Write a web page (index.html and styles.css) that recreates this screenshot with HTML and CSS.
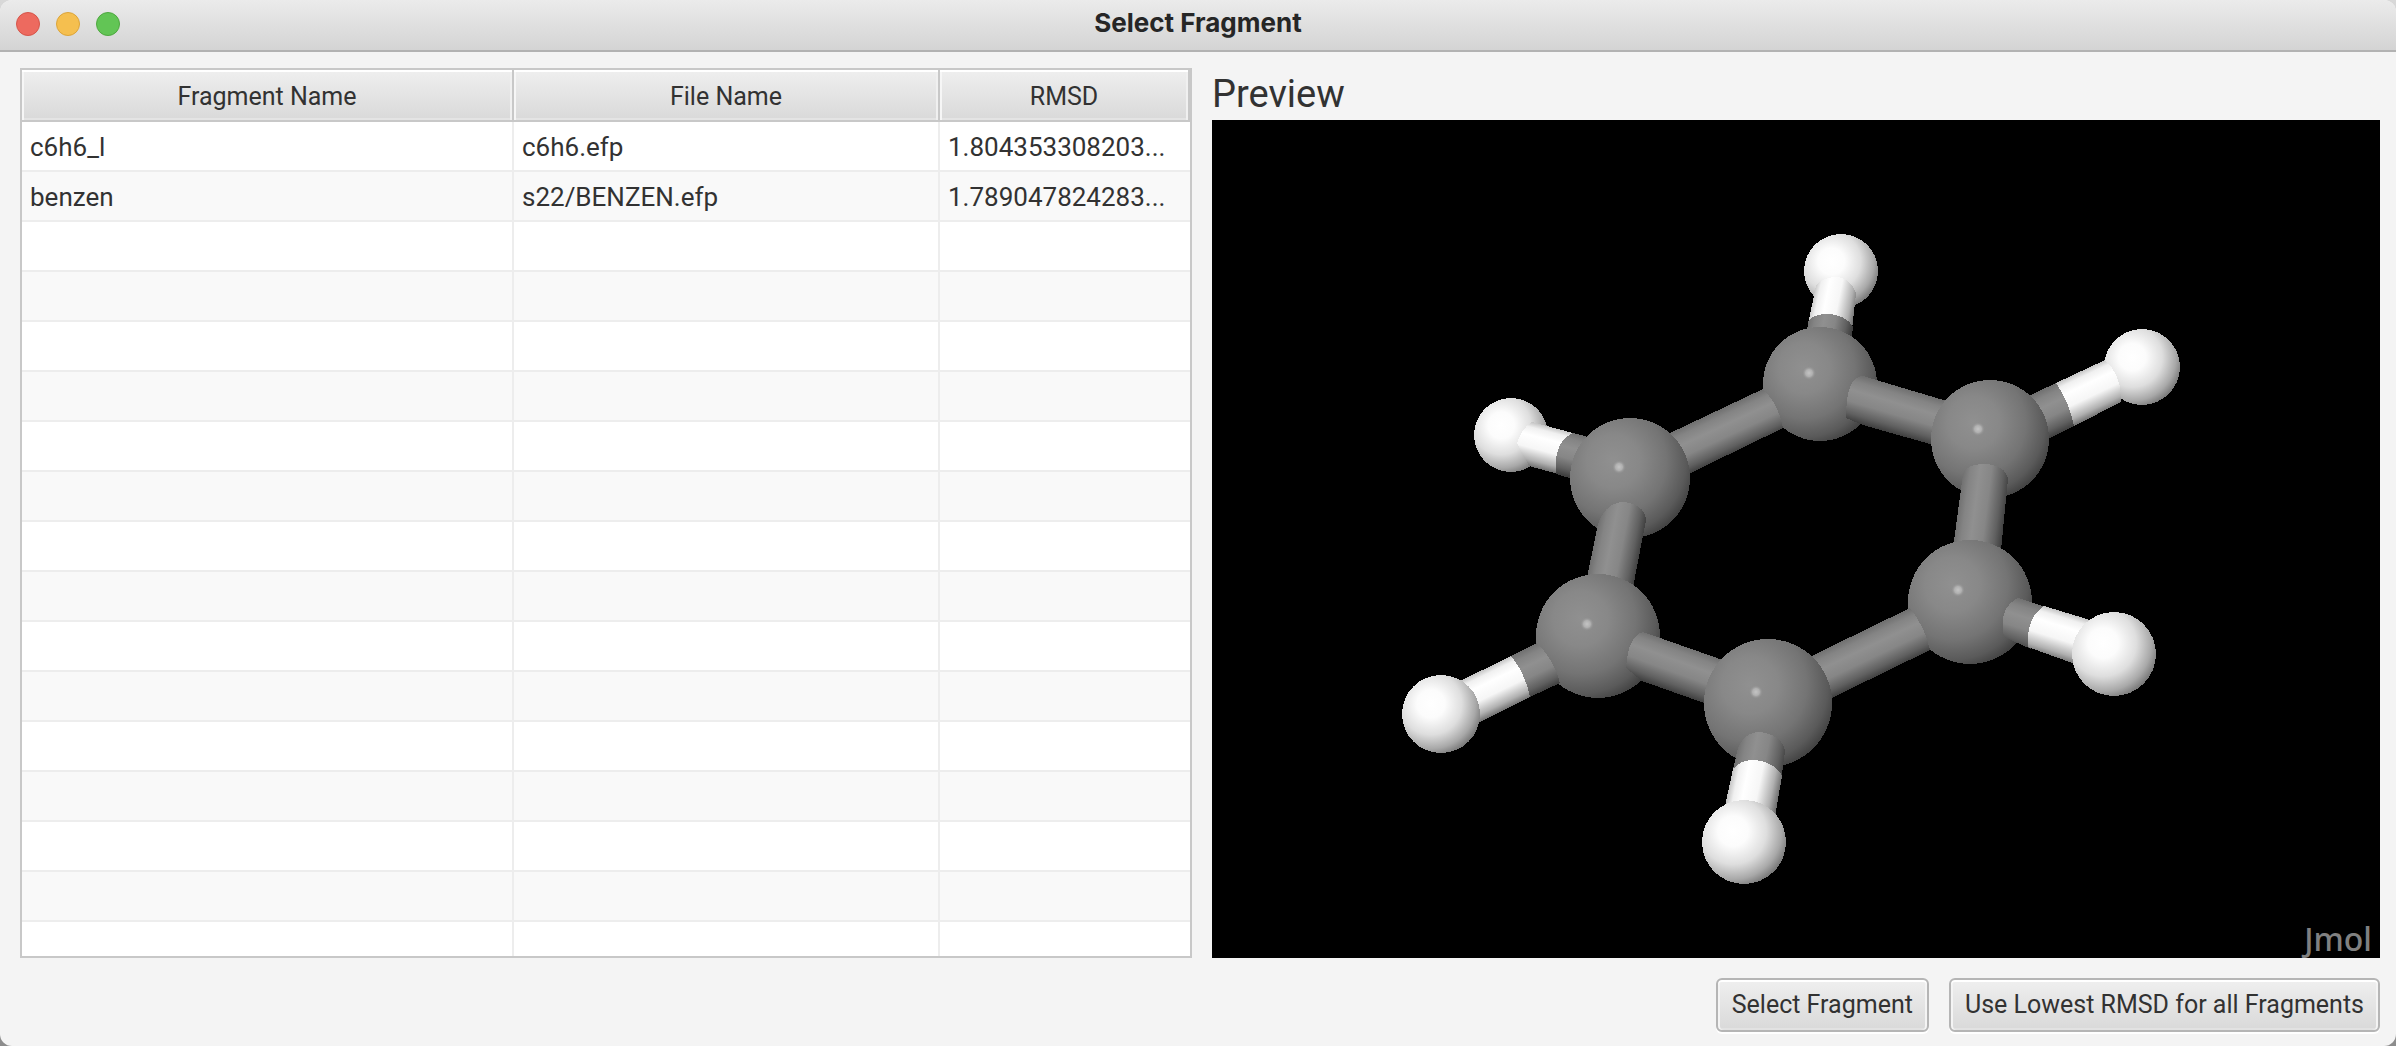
FILE: index.html
```html
<!DOCTYPE html>
<html lang="en">
<head>
<meta charset="utf-8">
<title>Select Fragment</title>
<link rel="stylesheet" href="styles.css">
</head>
<body>
<div class="window">
  <header class="titlebar">
    <div class="lights">
      <button class="light light-close" aria-label="Close"></button>
      <button class="light light-minimize" aria-label="Minimize"></button>
      <button class="light light-zoom" aria-label="Zoom"></button>
    </div>
    <h1 class="title">Select Fragment</h1>
  </header>

  <main class="content">
    <div class="table-frame">
      <table class="fragments">
        <colgroup><col class="col-fragment"><col class="col-file"><col></colgroup>
        <thead>
          <tr><th scope="col">Fragment Name</th><th scope="col">File Name</th><th scope="col">RMSD</th></tr>
        </thead>
        <tbody>
          <tr><td>c6h6_l</td><td>c6h6.efp</td><td>1.804353308203...</td></tr>
          <tr><td>benzen</td><td>s22/BENZEN.efp</td><td>1.789047824283...</td></tr>
          <tr><td></td><td></td><td></td></tr>
          <tr><td></td><td></td><td></td></tr>
          <tr><td></td><td></td><td></td></tr>
          <tr><td></td><td></td><td></td></tr>
          <tr><td></td><td></td><td></td></tr>
          <tr><td></td><td></td><td></td></tr>
          <tr><td></td><td></td><td></td></tr>
          <tr><td></td><td></td><td></td></tr>
          <tr><td></td><td></td><td></td></tr>
          <tr><td></td><td></td><td></td></tr>
          <tr><td></td><td></td><td></td></tr>
          <tr><td></td><td></td><td></td></tr>
          <tr><td></td><td></td><td></td></tr>
          <tr><td></td><td></td><td></td></tr>
          <tr><td></td><td></td><td></td></tr>
        </tbody>
      </table>
    </div>

    <section class="preview">
      <h2 class="preview-title">Preview</h2>
      <div class="viewer">
        <svg class="molecule" viewBox="1212 120 1168 838" role="img" aria-label="Benzene molecule" shape-rendering="crispEdges">
          <defs>
            <radialGradient id="carbon" cx=".36" cy=".36" r=".74">
              <stop offset="0" stop-color="#909090"/><stop offset=".3" stop-color="#888"/>
              <stop offset=".6" stop-color="#747474"/><stop offset=".82" stop-color="#5a5a5a"/><stop offset=".95" stop-color="#404040"/>
            </radialGradient>
            <radialGradient id="hydrogen" cx=".37" cy=".37" r=".72">
              <stop offset="0" stop-color="#fff"/><stop offset=".25" stop-color="#fcfcfc"/>
              <stop offset=".55" stop-color="#dedede"/><stop offset=".8" stop-color="#a8a8a8"/><stop offset=".95" stop-color="#767676"/>
            </radialGradient>
            <radialGradient id="glint">
              <stop offset="0" stop-color="#c4c4c4"/><stop offset=".5" stop-color="#b0b0b0"/><stop offset="1" stop-color="#8e8e8e" stop-opacity="0"/>
            </radialGradient>
            <linearGradient id="gray">
              <stop offset="0" stop-color="#707070"/><stop offset=".15" stop-color="#848484"/><stop offset=".35" stop-color="#909090"/>
              <stop offset=".6" stop-color="#868686"/><stop offset=".85" stop-color="#606060"/><stop offset="1" stop-color="#404040"/>
            </linearGradient>
            <linearGradient id="white">
              <stop offset="0" stop-color="#c4c4c4"/><stop offset=".12" stop-color="#f0f0f0"/><stop offset=".3" stop-color="#fff"/>
              <stop offset=".58" stop-color="#f6f6f6"/><stop offset=".85" stop-color="#b0b0b0"/><stop offset="1" stop-color="#707070"/>
            </linearGradient>
            <linearGradient id="g16" href="#gray" gradientUnits="userSpaceOnUse" x1="1672" y1="432" x2="1691" y2="473"/>
            <linearGradient id="g34" href="#gray" gradientUnits="userSpaceOnUse" x1="1811" y1="656" x2="1831" y2="698"/>
            <linearGradient id="g56" href="#gray" gradientUnits="userSpaceOnUse" x1="1946" y1="401" x2="1933" y2="445"/>
            <linearGradient id="g23" href="#gray" gradientUnits="userSpaceOnUse" x1="1720" y1="659" x2="1704" y2="703"/>
            <linearGradient id="g12" href="#gray" gradientUnits="userSpaceOnUse" x1="1588" y1="574" x2="1634" y2="583"/>
            <linearGradient id="g45" href="#gray" gradientUnits="userSpaceOnUse" x1="1954" y1="540" x2="2001" y2="546"/>
            <linearGradient id="g1h" href="#gray" gradientUnits="userSpaceOnUse" x1="1532" y1="422" x2="1521" y2="464"/>
            <linearGradient id="w1h" href="#white" gradientUnits="userSpaceOnUse" x1="1532" y1="422" x2="1521" y2="464"/>
            <linearGradient id="g2h" href="#gray" gradientUnits="userSpaceOnUse" x1="1464" y1="679" x2="1484" y2="720"/>
            <linearGradient id="w2h" href="#white" gradientUnits="userSpaceOnUse" x1="1464" y1="679" x2="1484" y2="720"/>
            <linearGradient id="g3h" href="#gray" gradientUnits="userSpaceOnUse" x1="1726" y1="803" x2="1775" y2="813"/>
            <linearGradient id="w3h" href="#white" gradientUnits="userSpaceOnUse" x1="1726" y1="803" x2="1775" y2="813"/>
            <linearGradient id="g4h" href="#gray" gradientUnits="userSpaceOnUse" x1="2086" y1="619" x2="2072" y2="664"/>
            <linearGradient id="w4h" href="#white" gradientUnits="userSpaceOnUse" x1="2086" y1="619" x2="2072" y2="664"/>
            <linearGradient id="g5h" href="#gray" gradientUnits="userSpaceOnUse" x1="2031" y1="395" x2="2051" y2="437"/>
            <linearGradient id="w5h" href="#white" gradientUnits="userSpaceOnUse" x1="2031" y1="395" x2="2051" y2="437"/>
            <linearGradient id="g6h" href="#gray" gradientUnits="userSpaceOnUse" x1="1808" y1="320" x2="1852" y2="329"/>
            <linearGradient id="w6h" href="#white" gradientUnits="userSpaceOnUse" x1="1808" y1="320" x2="1852" y2="329"/>
          </defs>

          <!-- Back of the ring -->
          <circle cx="1841" cy="271" r="37" fill="url(#hydrogen)"/>
          <path fill="url(#w6h)" d="M1816 286Q1822 277 1837 277Q1850 278 1856 293L1852 330L1808 324Z"/>
          <path fill="url(#g6h)" d="M1808 321Q1814 314 1828 314Q1846 315 1853 327L1850 350L1806 344Z"/>
          <circle cx="1820" cy="384" r="57" fill="url(#carbon)"/>
          <circle cx="1809" cy="373" r="7" fill="url(#glint)"/>
          <path fill="url(#g56)" d="M1863 376L1960 405L1944 448L1863 425L1846 418Q1846 376 1863 376Z"/>
          <path fill="url(#g16)" d="M1651 442L1763 389Q1779 405 1783 428L1672 482Z"/>

          <circle cx="1511" cy="435" r="37" fill="url(#hydrogen)"/>
          <path fill="url(#w1h)" d="M1532 422L1573 433L1562 475L1529 466L1517 443Q1522 428 1532 422Z"/>
          <path fill="url(#g1h)" d="M1573 433L1600 440L1590 484L1556 474Q1553 442 1573 433Z"/>
          <circle cx="1630" cy="478" r="60" fill="url(#carbon)"/>
          <circle cx="1619" cy="467" r="7" fill="url(#glint)"/>

          <circle cx="2142" cy="367" r="38" fill="url(#hydrogen)"/>
          <path fill="url(#w5h)" d="M2056 383L2105 360Q2122 376 2121 402L2074 426Z"/>
          <path fill="url(#g5h)" d="M2020 400L2056 383Q2070 404 2074 426L2040 443Z"/>
          <circle cx="1990" cy="439" r="59" fill="url(#carbon)"/>
          <circle cx="1978" cy="429" r="7" fill="url(#glint)"/>

          <!-- Left and right sides -->
          <path fill="url(#g12)" d="M1598 524Q1606 502 1624 502Q1645 505 1646 520L1630 603L1583 597Z"/>
          <path fill="url(#g45)" d="M1963 474Q1967 464 1985 464Q2005 465 2008 479L2000 560L1952 556Z"/>
          <circle cx="1598" cy="636" r="62" fill="url(#carbon)"/>
          <circle cx="1587" cy="624" r="7" fill="url(#glint)"/>
          <circle cx="1970" cy="602" r="62" fill="url(#carbon)"/>
          <circle cx="1958" cy="590" r="7" fill="url(#glint)"/>

          <!-- Front of the ring -->
          <path fill="url(#g2h)" d="M1511 656L1537 643Q1554 660 1560 683L1530 697Z"/>
          <path fill="url(#w2h)" d="M1454 684L1511 656Q1525 673 1530 697L1470 727Z"/>
          <circle cx="1441" cy="714" r="39" fill="url(#hydrogen)"/>
          <path fill="url(#g23)" d="M1643 632L1737 665L1721 709L1642 681L1626 668Q1628 636 1643 632Z"/>
          <path fill="url(#g34)" d="M1791 666L1910 608Q1925 627 1930 650L1805 711Z"/>
          <path fill="url(#g4h)" d="M2018 598L2046 607L2031 649L2004 637Q1998 608 2018 598Z"/>
          <path fill="url(#w4h)" d="M2044 606L2100 623L2086 668L2028 647Q2026 618 2044 606Z"/>
          <circle cx="2114" cy="654" r="42" fill="url(#hydrogen)"/>
          <circle cx="1768" cy="703" r="64" fill="url(#carbon)"/>
          <circle cx="1756" cy="692" r="7" fill="url(#glint)"/>
          <path fill="url(#g3h)" d="M1738 748Q1745 732 1760 732Q1782 735 1785 751L1781 782L1732 774Z"/>
          <path fill="url(#w3h)" d="M1733 769Q1740 760 1754 760Q1775 762 1782 776L1773 828L1722 820Z"/>
          <circle cx="1744" cy="842" r="42" fill="url(#hydrogen)"/>
        </svg>
        <span class="credit">Jmol</span>
      </div>
    </section>
  </main>

  <footer class="actions">
    <button class="button">Select Fragment</button>
    <button class="button">Use Lowest RMSD for all Fragments</button>
  </footer>
</div>
</body>
</html>
```
FILE: styles.css
```css
* {
  box-sizing: border-box;
}

body {
  margin: 0;
  background: linear-gradient(#d8d8d8, #8c8c8c);
  color: #323232;
  font: 25px/32px Roboto, "Liberation Sans", sans-serif;
}

.window {
  display: flex;
  flex-direction: column;
  height: 100vh;
  background: #f4f4f4;
  border-radius: 12px;
  overflow: hidden;
}

.titlebar {
  display: grid;
  grid-template-columns: 1fr auto 1fr;
  align-items: start;
  height: 52px;
  flex: none;
  padding: 0 16px;
  background: linear-gradient(#ebebeb, #d4d4d4);
  border-bottom: 2px solid #b2b2b2;
}

.lights {
  display: flex;
  gap: 16px;
  padding-top: 12px;
}

.light {
  width: 24px;
  height: 24px;
  padding: 0;
  border: 1px solid;
  border-radius: 50%;
}

.light-close {
  background: #ed6a5f;
  border-color: #d5554a;
}

.light-minimize {
  background: #f5bf4f;
  border-color: #dba43a;
}

.light-zoom {
  background: #62c555;
  border-color: #4ea73f;
}

.title {
  margin: 0;
  color: #262626;
  font: 700 26px/46px Inter, "Liberation Sans", sans-serif;
}

.content {
  flex: 1;
  min-height: 0;
  display: grid;
  grid-template-columns: 293fr 292fr;
  grid-template-rows: minmax(0, 1fr);
  gap: 20px;
  padding: 16px 16px 0 20px;
}

.table-frame {
  overflow: hidden;
  background: #fff;
  border: 2px solid #c8c8c8;
}

.fragments {
  width: 100%;
  table-layout: fixed;
  border-collapse: separate;
  border-spacing: 0;
}

.col-fragment {
  width: 492px;
}

.col-file {
  width: 426px;
}

.fragments th {
  height: 52px;
  padding: 4px 0 0;
  background: linear-gradient(#efefef, #d9d9d9);
  border: 0 solid #c8c8c8;
  border-width: 0 2px 2px 0;
  box-shadow: inset 0 2px #fff, inset 2px 0 #f6f6f6, inset -2px 0 #f0f0f0, inset 0 -2px #e4e4e4;
  font-weight: 400;
  text-align: center;
}

.fragments td {
  height: 50px;
  padding: 2px 8px 0;
  border: 0 solid #ededed;
  border-width: 0 2px 2px 0;
  font-size: 26px;
  white-space: nowrap;
}

.fragments td:last-child {
  border-right-width: 0;
}

.fragments tbody tr:nth-child(even) {
  background: #f9f9f9;
}

.preview {
  display: flex;
  flex-direction: column;
  min-width: 0;
}

.preview-title {
  margin: 0;
  height: 52px;
  flex: none;
  font-size: 38px;
  font-weight: 400;
  line-height: 52px;
}

.viewer {
  position: relative;
  flex: 1;
  min-height: 0;
  background: #000;
}

.molecule {
  display: block;
  width: 100%;
  height: 100%;
}

.credit {
  position: absolute;
  right: 8px;
  bottom: 0;
  color: #808080;
  font: 500 32px/38px "Noto Sans", sans-serif;
}

.actions {
  display: flex;
  justify-content: flex-end;
  gap: 20px;
  flex: none;
  padding: 20px 16px 14px;
}

.button {
  height: 54px;
  padding: 0 14px;
  background: linear-gradient(#efefef, #d9d9d9);
  border: 2px solid #b5b5b5;
  border-radius: 6px;
  box-shadow: inset 0 2px #fff, inset 2px 0 #f4f4f4, inset -2px 0 #f4f4f4, inset 0 -2px #e2e2e2, 0 2px #fff;
  color: #323232;
  font: inherit;
}
```
